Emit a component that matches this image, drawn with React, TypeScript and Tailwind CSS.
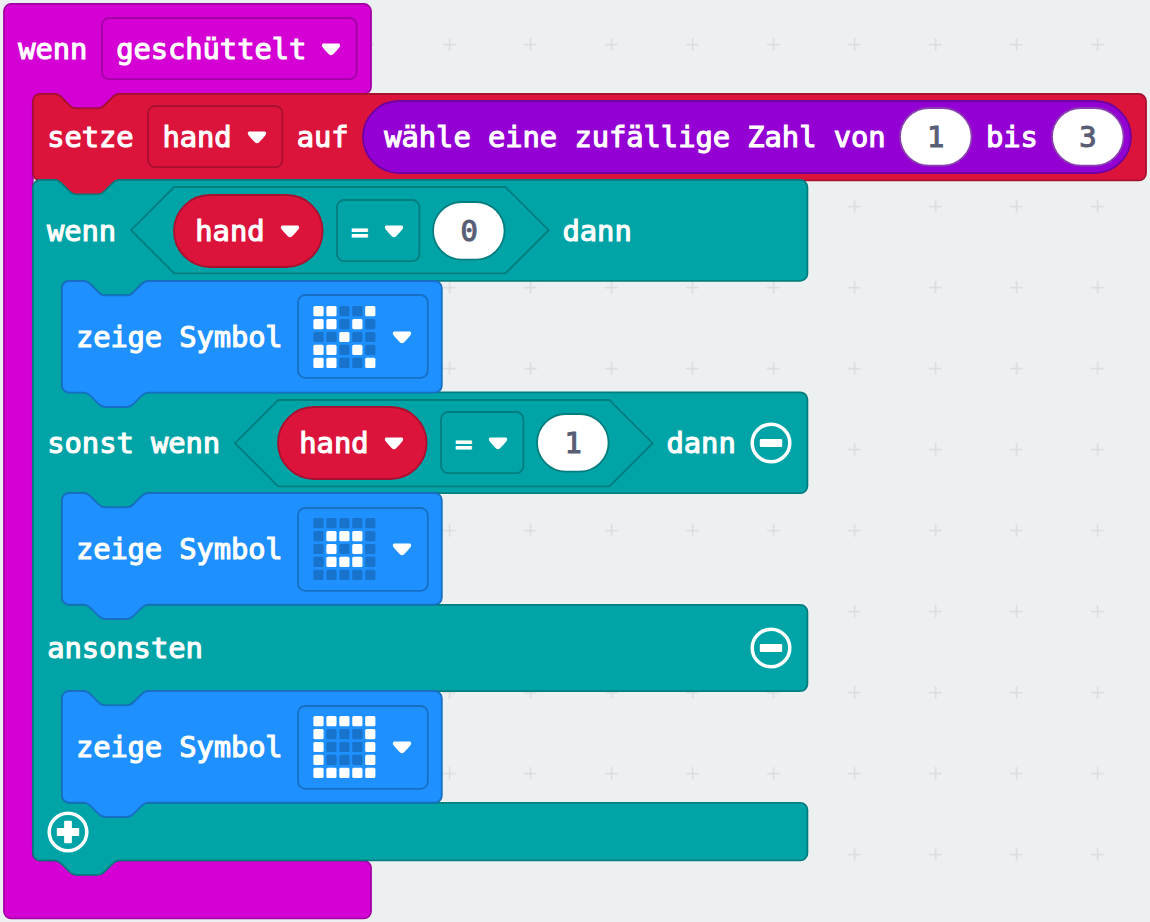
import type { ReactNode } from "react";

const U = 1.8;
const R = 4 * U;

const notch = (dir: 1 | -1) => {
  const x = (n: number) => (n * U * dir).toFixed(2);
  const y = (n: number) => (n * U).toFixed(2);
  return [
    `c ${x(2)},0 ${x(3)},${y(1)} ${x(4)},${y(2)}`,
    `l ${x(4)},${y(4)}`,
    `c ${x(1)},${y(1)} ${x(2)},${y(2)} ${x(4)},${y(2)}`,
    `h ${x(12)}`,
    `c ${x(2)},0 ${x(3)},${y(-1)} ${x(4)},${y(-2)}`,
    `l ${x(4)},${y(-4)}`,
    `c ${x(1)},${y(-1)} ${x(2)},${y(-2)} ${x(4)},${y(-2)}`,
  ].join(" ");
};

const NOTCH_START = 12 * U;
const NOTCH_END = 48 * U;
const INDENT = 16 * U;

type Mouth = { top: number; bottom: number };

function blockPath(w: number, h: number, mouths: Mouth[], previous: boolean, next: boolean) {
  const p = [`M 0,${R} a ${R},${R} 0 0 1 ${R},${-R}`];
  if (previous) p.push(`H ${NOTCH_START} ${notch(1)}`);
  p.push(`H ${w - R} a ${R},${R} 0 0 1 ${R},${R}`);
  for (const m of mouths) {
    p.push(`V ${m.top - R} a ${R},${R} 0 0 1 ${-R},${R}`);
    p.push(`H ${INDENT + NOTCH_END} ${notch(-1)} H ${INDENT + R}`);
    p.push(`a ${R},${R} 0 0 0 ${-R},${R} V ${m.bottom - R} a ${R},${R} 0 0 0 ${R},${R}`);
    p.push(`H ${w - R} a ${R},${R} 0 0 1 ${R},${R}`);
  }
  p.push(`V ${h - R} a ${R},${R} 0 0 1 ${-R},${R}`);
  if (next) p.push(`H ${NOTCH_END} ${notch(-1)}`);
  p.push(`H ${R} a ${R},${R} 0 0 1 ${-R},${-R} Z`);
  return p.join(" ");
}

function Outline({ d, r = 0, className }: { d?: string; r?: number; className: string }) {
  return (
    <svg className={`absolute inset-0 -z-10 size-full overflow-visible ${className}`} strokeWidth={U}>
      {d ? <path d={d} /> : <rect width="100%" height="100%" rx={r} />}
    </svg>
  );
}

const MAGENTA = "fill-[#d400d4] stroke-[#a300a5]";
const RED = "fill-[#dc143c] stroke-[#a81030]";
const PURPLE = "fill-[#9400d3] stroke-[#7100a3]";
const TEAL = "fill-[#00a4a6] stroke-[#007d7f]";
const BLUE = "fill-[#1e90ff] stroke-[#176fc4]";

function Arrow() {
  return (
    <svg viewBox="0 -1 20 14" className="h-[14px] w-[20px] shrink-0 fill-white">
      <path d="M2.6.5H17.4C19.3.5 19.7 2.6 18.6 4C16.6 6.4 14.4 8.9 12.1 11.3C10.7 12.7 9.3 12.7 7.9 11.3C5.6 8.9 3.4 6.4 1.4 4C.3 2.6.7.5 2.6.5Z" />
    </svg>
  );
}

function Dropdown({ width, stroke, children }: { width: string; stroke: string; children: ReactNode }) {
  return (
    <div className={`relative isolate flex h-[61.2px] items-center justify-between pr-[15.5px] pl-[14.4px] ${width}`}>
      <Outline r={R} className={`fill-none ${stroke}`} />
      {children}
      <Arrow />
    </div>
  );
}

function Num({ value, stroke }: { value: number; stroke: string }) {
  return (
    <div className="relative isolate flex h-[57.6px] w-[71.6px] items-center justify-center text-[#575e75] [-webkit-text-stroke-color:#575e75]">
      <Outline r={28.8} className={`fill-white ${stroke}`} />
      {value}
    </div>
  );
}

function HandPill() {
  return (
    <div className="relative isolate flex h-[72px] w-[148.6px] items-center justify-between pr-[22.4px] pl-[21.6px]">
      <Outline r={36} className={RED} />
      <span>hand</span>
      <Arrow />
    </div>
  );
}

function Comparison({ value }: { value: number }) {
  return (
    <div className="relative isolate flex h-[86.4px] w-[417.6px] items-center justify-between px-[43.2px]">
      <Outline d="M 43.2,0 H 374.4 L 417.6,43.2 L 374.4,86.4 H 43.2 L 0,43.2 Z" className={TEAL} />
      <HandPill />
      <Dropdown width="w-[82.4px]" stroke="stroke-[#007d7f]">
        <span className="pt-[2px]">=</span>
      </Dropdown>
      <Num value={value} stroke="stroke-[#007d7f]" />
    </div>
  );
}

function RoundButton({ plus = false }: { plus?: boolean }) {
  return (
    <svg viewBox="-21 -21 42 42" className="size-[42px] shrink-0">
      <circle r="18.8" className="fill-none stroke-white" strokeWidth="3.5" />
      <rect x="-11.2" y="-3.9" width="22.4" height="7.8" rx="1.2" className="fill-white" />
      {plus && <rect x="-3.9" y="-11.2" width="7.8" height="22.4" rx="1.2" className="fill-white" />}
    </svg>
  );
}

function Leds({ rows }: { rows: string[] }) {
  return (
    <svg viewBox="0 0 63 62" className="h-[62px] w-[63px] shrink-0">
      {rows.flatMap((row, y) =>
        [...row].map((c, x) => (
          <rect
            key={`${x}-${y}`}
            x={x * 12.95 + 0.4}
            y={y * 12.95}
            width="10.2"
            height="10.2"
            rx="1.5"
            className={c === "#" ? "fill-white" : "fill-[#1873cc]"}
          />
        )),
      )}
    </svg>
  );
}

function ShowIcon({ rows }: { rows: string[] }) {
  return (
    <div className="relative isolate flex h-[111.6px] w-[379.8px] items-center justify-between px-[14.2px]">
      <Outline d={blockPath(379.8, 111.6, [], true, true)} className={BLUE} />
      <span className="tracking-[-0.12px]">zeige Symbol</span>
      <div className="relative isolate flex h-[82.8px] w-[129.8px] items-center justify-between pr-[15.5px] pl-[15.4px]">
        <Outline r={R} className="fill-none stroke-[#176fc4]" />
        <Leds rows={rows} />
        <Arrow />
      </div>
    </div>
  );
}

function SetHand() {
  return (
    <div className="relative isolate flex h-[86.4px] w-[1113px] items-center gap-[14.4px] px-[14.6px]">
      <Outline d={blockPath(1113, 86.4, [], true, true)} className={RED} />
      <span>setze</span>
      <Dropdown width="w-[134.4px]" stroke="stroke-[#a81030]">
        <span>hand</span>
      </Dropdown>
      <span>auf</span>
      <div className="relative isolate flex h-[72px] flex-1 items-center justify-between pr-[7.2px] pl-[21.2px]">
        <Outline r={36} className={PURPLE} />
        <span>wähle eine zufällige Zahl von</span>
        <Num value={1} stroke="stroke-[#8a3fb0]" />
        <span>bis</span>
        <Num value={3} stroke="stroke-[#8a3fb0]" />
      </div>
    </div>
  );
}

function IfBlock() {
  const mouths = [
    { top: 100.8, bottom: 212.4 },
    { top: 313.2, bottom: 424.8 },
    { top: 511.2, bottom: 622.8 },
  ];
  return (
    <div className="relative isolate flex w-[774.4px] flex-col">
      <Outline d={blockPath(774.4, 680.4, mouths, true, true)} className={TEAL} />
      <div className="flex h-[100.8px] items-center gap-[14.4px] px-[14.4px]">
        <span>wenn</span>
        <Comparison value={0} />
        <span>dann</span>
      </div>
      <div className="flex pl-[29.2px]">
        <ShowIcon rows={["##..#", "##.#.", "..#..", "##.#.", "##..#"]} />
      </div>
      <div className="flex h-[100.8px] items-center gap-[14.4px] px-[14.7px]">
        <span>sonst wenn</span>
        <Comparison value={1} />
        <span>dann</span>
        <RoundButton />
      </div>
      <div className="flex pl-[29.2px]">
        <ShowIcon rows={[".....", ".###.", ".#.#.", ".###.", "....."]} />
      </div>
      <div className="flex h-[86.4px] items-center justify-between px-[14.6px]">
        <span>ansonsten</span>
        <RoundButton />
      </div>
      <div className="flex pl-[29.2px]">
        <ShowIcon rows={["#####", "#...#", "#...#", "#...#", "#####"]} />
      </div>
      <div className="flex h-[57.6px] items-center px-[14.6px]">
        <RoundButton plus />
      </div>
    </div>
  );
}

function Crosses() {
  return (
    <svg className="absolute inset-0 -z-10 size-full">
      <defs>
        <pattern id="crosses" x="3.8" y="3.8" width="81" height="81" patternUnits="userSpaceOnUse">
          <path d="M34.2 40.7H46.8M40.7 34.2V46.8" className="stroke-[#d9dddf]" strokeWidth="1.6" />
        </pattern>
      </defs>
      <rect width="100%" height="100%" fill="url(#crosses)" />
    </svg>
  );
}

export default function App() {
  return (
    <main className="relative isolate h-[922px] w-[1150px] overflow-hidden bg-[#ecf0f1] pt-[3.8px] pl-[3.8px] font-['DejaVu_Sans_Mono',monospace] text-[28.8px] leading-[36px] tracking-[-0.05px] whitespace-pre text-white [-webkit-text-stroke:1.1px_white]">
      <Crosses />
      <div className="relative isolate flex w-[367px] flex-col pb-[57.6px]">
        <Outline d={blockPath(367, 914.4, [{ top: 90, bottom: 856.8 }], false, false)} className={MAGENTA} />
        <div className="flex h-[90px] items-center gap-[14.4px] px-[14.4px]">
          <span className="pt-[1px]">wenn</span>
          <Dropdown width="w-[255.2px]" stroke="stroke-[#a300a5]">
            <span className="pt-[1px]">geschüttelt</span>
          </Dropdown>
        </div>
        <div className="flex flex-col pl-[28.8px]">
          <SetHand />
          <IfBlock />
        </div>
      </div>
    </main>
  );
}
